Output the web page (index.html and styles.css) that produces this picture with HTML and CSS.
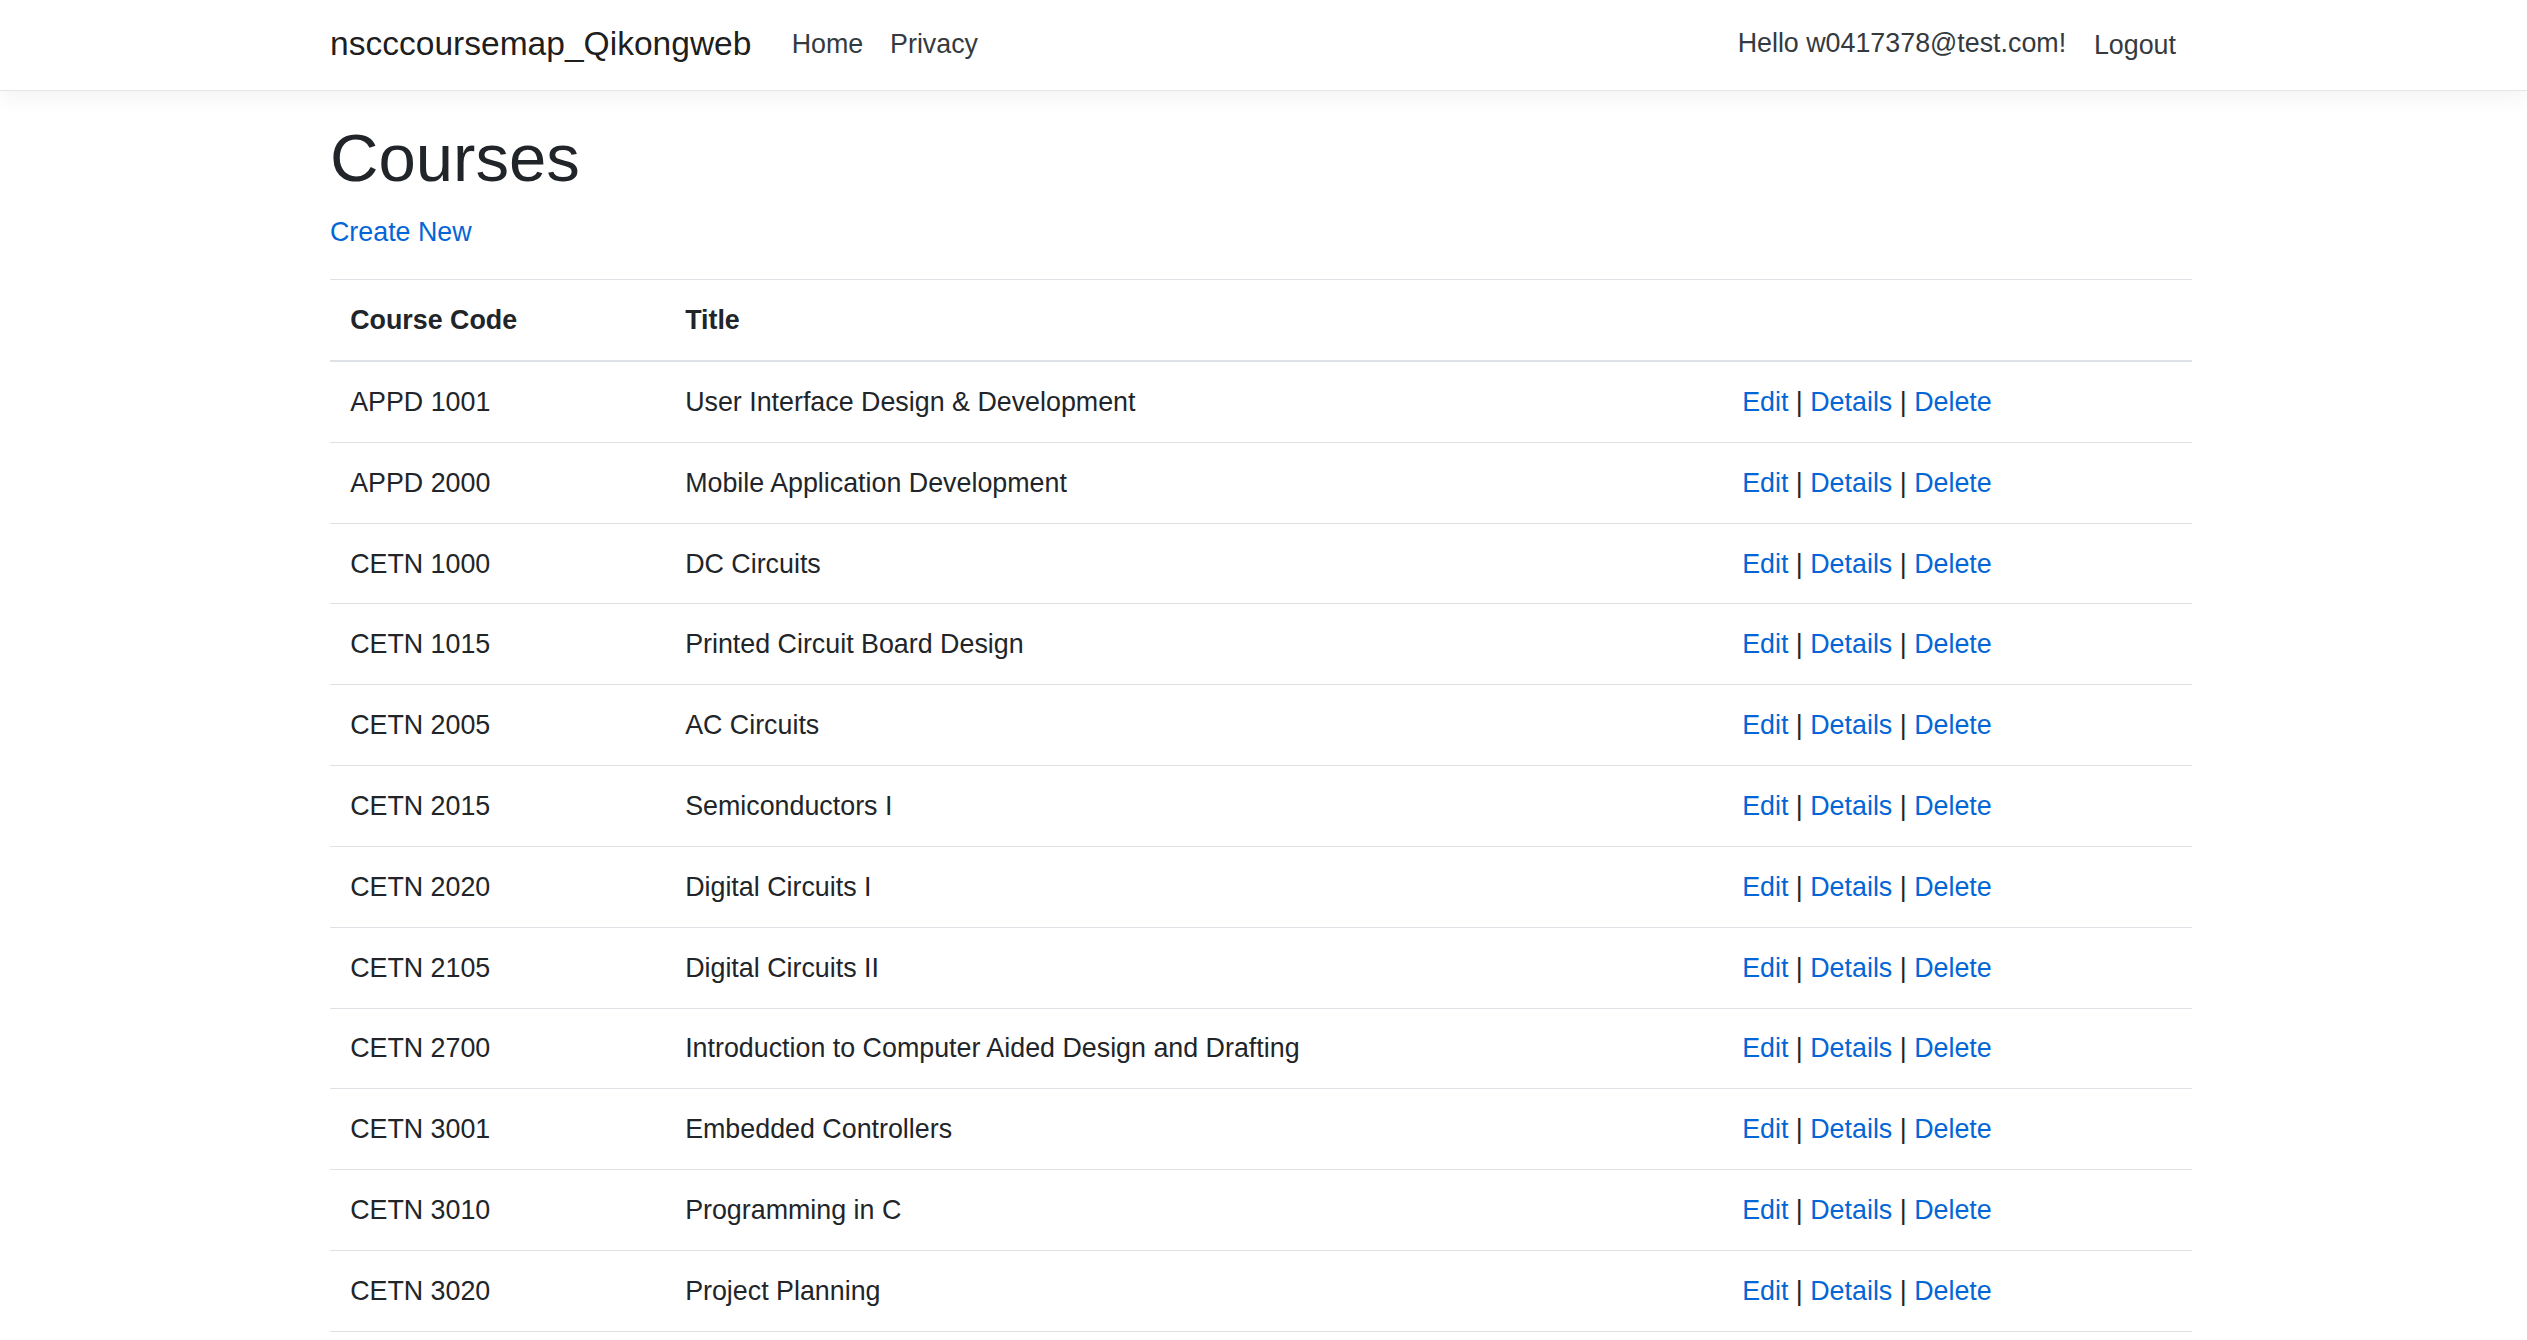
FILE: index.html
```html
<!DOCTYPE html>
<html lang="en">
<head>
<meta charset="utf-8">
<title>Index - nscccoursemap_Qikongweb</title>
<link rel="stylesheet" href="styles.css">
</head>
<body>
<header class="navbar">
  <div class="container nav-inner">
    <a class="brand" href="#">nscccoursemap_Qikongweb</a>
    <ul class="nav-list nav-grow">
      <li><a class="nav-link" href="#">Home</a></li>
      <li><a class="nav-link" href="#">Privacy</a></li>
    </ul>
    <ul class="nav-list nav-right">
      <li><a class="nav-link" href="#">Hello w0417378@test.com!</a></li>
      <li><button type="button" class="nav-link nav-btn">Logout</button></li>
    </ul>
  </div>
</header>
<div class="container">
  <main class="main">
    <h1 class="page-title">Courses</h1>
    <p class="create"><a class="link" href="#">Create New</a></p>
    <table class="table">
      <thead>
        <tr>
          <th class="col-code">Course Code</th>
          <th class="col-title">Title</th>
          <th class="col-actions"></th>
        </tr>
      </thead>
      <tbody>
        <tr><td>APPD 1001</td><td>User Interface Design &amp; Development</td><td><a class="link" href="#">Edit</a> | <a class="link" href="#">Details</a> | <a class="link" href="#">Delete</a></td></tr>
        <tr><td>APPD 2000</td><td>Mobile Application Development</td><td><a class="link" href="#">Edit</a> | <a class="link" href="#">Details</a> | <a class="link" href="#">Delete</a></td></tr>
        <tr><td>CETN 1000</td><td>DC Circuits</td><td><a class="link" href="#">Edit</a> | <a class="link" href="#">Details</a> | <a class="link" href="#">Delete</a></td></tr>
        <tr><td>CETN 1015</td><td>Printed Circuit Board Design</td><td><a class="link" href="#">Edit</a> | <a class="link" href="#">Details</a> | <a class="link" href="#">Delete</a></td></tr>
        <tr><td>CETN 2005</td><td>AC Circuits</td><td><a class="link" href="#">Edit</a> | <a class="link" href="#">Details</a> | <a class="link" href="#">Delete</a></td></tr>
        <tr><td>CETN 2015</td><td>Semiconductors I</td><td><a class="link" href="#">Edit</a> | <a class="link" href="#">Details</a> | <a class="link" href="#">Delete</a></td></tr>
        <tr><td>CETN 2020</td><td>Digital Circuits I</td><td><a class="link" href="#">Edit</a> | <a class="link" href="#">Details</a> | <a class="link" href="#">Delete</a></td></tr>
        <tr><td>CETN 2105</td><td>Digital Circuits II</td><td><a class="link" href="#">Edit</a> | <a class="link" href="#">Details</a> | <a class="link" href="#">Delete</a></td></tr>
        <tr><td>CETN 2700</td><td>Introduction to Computer Aided Design and Drafting</td><td><a class="link" href="#">Edit</a> | <a class="link" href="#">Details</a> | <a class="link" href="#">Delete</a></td></tr>
        <tr><td>CETN 3001</td><td>Embedded Controllers</td><td><a class="link" href="#">Edit</a> | <a class="link" href="#">Details</a> | <a class="link" href="#">Delete</a></td></tr>
        <tr><td>CETN 3010</td><td>Programming in C</td><td><a class="link" href="#">Edit</a> | <a class="link" href="#">Details</a> | <a class="link" href="#">Delete</a></td></tr>
        <tr><td>CETN 3020</td><td>Project Planning</td><td><a class="link" href="#">Edit</a> | <a class="link" href="#">Details</a> | <a class="link" href="#">Delete</a></td></tr>
      </tbody>
    </table>
  </main>
</div>
</body>
</html>
```

FILE: styles.css
```css
*, *::before, *::after { box-sizing: border-box; }

html { overflow: hidden; }

body {
  margin: 0;
  font-family: "Liberation Sans", Arial, sans-serif;
  font-size: 26.84px;
  line-height: 40.26px;
  color: #212529;
  background: #fff;
}

.container {
  width: 1867px;
  padding-right: 5px;
  margin: 0 auto;
}

/* navbar */
.navbar {
  background: #fff;
  border-bottom: 1px solid #e5e5e5;
  box-shadow: 0 6.7px 20px rgba(0, 0, 0, 0.05);
  padding: 10.9px 0 12.4px;
  margin-bottom: 26.84px;
}

.nav-inner {
  display: flex;
  align-items: center;
}

.brand {
  display: inline-block;
  font-size: 33.55px;
  line-height: 50.3px;
  padding: 8.4px 0;
  margin-right: 26.84px;
  color: rgba(0, 0, 0, 0.9);
  text-decoration: none;
  white-space: nowrap;
}

.nav-list {
  display: flex;
  list-style: none;
  margin: 0;
  padding: 0;
}

.nav-grow { flex-grow: 1; }

.nav-right { margin-right: 1.6px; }

.nav-link {
  display: block;
  padding: 8.4px 13.42px;
  font-size: 26.84px;
  line-height: 40.26px;
  color: #343a40;
  text-decoration: none;
  white-space: nowrap;
}

.nav-btn {
  font-family: inherit;
  background: transparent;
  border: 1px solid transparent;
  margin: 0;
  padding-top: 9.6px;
  padding-bottom: 8.4px;
  cursor: pointer;
}

/* main */
.main { padding-bottom: 26.84px; }

.page-title {
  margin: 0 0 13.42px;
  font-size: 67.1px;
  line-height: 80.5px;
  font-weight: 500;
}

.create { margin: 0 0 26.84px; }

.link {
  color: #0366d6;
  text-decoration: none;
}

/* table */
.table {
  width: 100%;
  table-layout: fixed;
  border-collapse: separate;
  border-spacing: 0;
  margin-bottom: 26.84px;
}

.table th,
.table td {
  padding: 19.92px 20.13px;
  line-height: 40px;
  text-align: left;
  vertical-align: top;
  border-top: 1px solid #dee2e6;
}

.table th {
  font-weight: bold;
  vertical-align: bottom;
  border-bottom: 2px solid #dee2e6;
}

.table tbody tr:first-child td { border-top: 0; }

.table tbody tr:last-child td { border-bottom: 1px solid #dee2e6; }

.col-code { width: 335px; }
.col-title { width: 1057px; }
.col-actions { width: 470px; }
```
